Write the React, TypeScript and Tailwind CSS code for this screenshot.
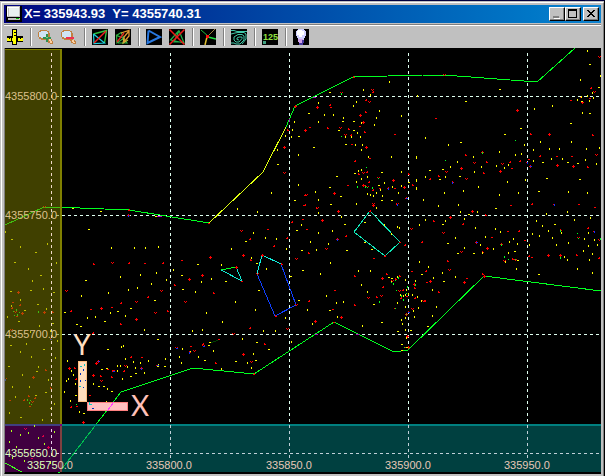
import type { ReactNode } from 'react';

// survey points, "x,y" pairs in plot pixels
const yellowTall = `389,81 363,89 370,94 417,95 353,105 356,101 318,102 324,114 333,114 379,110 401,115 294,121 318,121 343,117 361,122 376,117
374,124 357,132 292,129 291,136 285,135 345,136 351,136 360,136 355,144 362,144 361,149 368,156 391,156 416,157 298,154 277,149 358,170 361,169
401,171 298,184 271,192 315,191 318,199 356,203 361,178 367,176 356,181 384,182 392,186 401,185 398,192 416,188 416,180 380,189 367,193 370,194
373,195 376,192 382,195 237,208 257,211 318,212 318,232 341,216 301,224 332,230 310,241 328,243 316,249 265,237 253,232 231,248 251,257 276,238
286,248 266,268 235,301 206,312 222,321 202,329 255,309 320,273 330,262 326,295 336,302 343,301 307,309 285,317 337,316 312,323 263,330 275,330
291,341 358,270 361,284 362,325 384,224 397,226 391,233 438,205 458,204 376,207 399,227 419,261 370,270 367,291 433,277 428,266 442,272 455,276
432,289 417,296 412,294 436,306 432,315 421,300 418,307 414,316 413,310 405,317 401,319 402,323 405,329 406,337 397,276 391,281 405,279 406,289
400,294 403,295 405,294 408,293 397,302 405,306 415,280 419,224 425,219 460,211 445,220 464,218 477,211 455,237 464,247 475,227 495,228 500,231
485,236 480,244 493,248 482,252 509,241 513,238 517,243 508,252 505,261 516,268 529,244 532,233 539,235 542,225 548,230 552,237 561,232 556,244
568,242 564,256 567,259 577,268 588,232 584,238 594,239 588,245 583,250 592,253 597,244 589,259 592,272 546,213 574,219 567,211 590,217 536,220
587,50 580,79 600,75 587,95 581,96 592,92 577,99 589,100 593,97 582,112 552,105 534,108 425,137 448,144 499,151 524,144 533,149 540,141 549,148
559,148 571,141 586,148 599,147 416,156 473,156 457,161 450,166 425,176 445,176 416,179 416,187 444,192 463,190 478,186 474,171 481,166 496,165
504,167 508,164 515,154 521,153 533,160 551,158 562,158 585,159 596,163 525,179 507,181 518,192 568,191 587,192 499,194 423,199 111,247 134,247
145,247 158,246 173,269 156,272 140,274 120,276 166,279 151,283 137,287 128,289 108,292 81,295 195,291 110,312 125,315 87,317 95,316 144,329
192,330 123,345 201,281 211,278 221,264 121,346 67,360 125,358 117,365 120,365 133,361 135,367 140,362 148,360 127,366 117,370 122,378 144,372
158,364 165,358 179,356 181,362 182,348 198,356 107,388 106,401 66,380 75,383 71,370 79,411 93,383 70,400 64,391 68,378 73,374 253,353 247,362
251,367 242,338 213,350 221,368 5,231 20,246 47,243 56,262 28,268 32,280 43,288 20,299 46,308 7,316 39,325 30,331 20,351 31,356 55,357 22,374
48,379 12,386 54,403 9,412 42,419 29,386 57,340 11,305 50,330 26,343 15,396 38,366`;

const yellowWide = `329,92 308,113 342,121 353,121 338,130 353,130 298,136 345,144 313,147 277,164 336,176 381,172 354,173 329,187 340,196
294,200 330,204 378,185 381,200 391,200 408,182 344,224 296,230 346,250 301,250 245,241 256,263 225,281 258,290 302,270 290,276 329,310 298,300
381,322 364,222 364,242 371,249 443,281 427,326 410,330 401,344 401,350 406,347 397,331 373,304 388,277 391,278 421,274 442,224 468,214 495,208
447,243 457,253 473,253 514,251 517,260 554,224 538,274 499,89 465,101 589,64 598,87 581,101 589,113 570,123 520,128 504,134 460,142 442,169
429,170 439,179 459,176 542,162 567,162 577,163 546,178 579,179 538,191 72,208 100,211 155,216 88,229 85,280 181,275 182,289 154,300 130,308
117,311 104,321 80,326 157,339 197,264 107,349 101,369 106,368 130,376 135,373 157,366 164,366 189,351 111,391 103,386 98,386 83,413 75,395
76,324 64,312 208,345 209,342 204,360 235,361 255,360 256,342 268,349 11,239 35,252 14,262 40,275 30,290 10,291 53,292 18,321 52,323 10,345
43,349 8,366 36,371 35,395 20,417 50,408 37,304 24,310 45,392`;

const red = `341,93 330,105 331,107 317,107 310,127 305,130 327,128 340,128 348,129 345,135 351,135 352,144 355,161 370,158 366,147 364,132 363,122
365,112 369,102 366,100 372,90 373,92 360,126 360,115 395,134 284,147 287,130 284,173 358,174 363,173 367,172 348,185 305,195 304,205 334,193
316,208 363,185 365,186 367,187 369,182 378,178 373,190 380,188 393,180 395,188 404,187 412,185 373,204 408,174 241,231 250,239 268,229 274,246
210,257 202,275 213,293 243,255 250,260 306,195 305,205 317,208 292,222 303,219 322,220 307,229 338,211 337,239 326,249 308,253 296,259 346,236
335,290 309,301 333,309 341,317 354,305 315,321 354,276 287,329 250,328 233,334 287,238 374,258 373,205 397,204 382,278 386,274 368,298 376,297
381,296 383,287 511,205 532,204 579,204 472,211 485,215 450,217 433,221 443,233 463,224 411,229 422,242 492,237 501,244 508,231 487,248 482,252
461,252 447,261 449,270 405,245 412,271 426,271 427,282 430,281 438,292 414,284 414,288 423,301 425,301 412,309 415,298 395,308 406,314 467,278
464,282 482,274 504,261 512,259 515,260 529,256 532,257 519,231 525,240 548,255 560,230 560,255 576,255 578,238 588,228 599,240 599,258 595,207
407,336 405,347 408,347 395,279 392,281 399,276 399,291 403,290 407,296 401,298 436,118 517,110 530,134 549,134 592,135 599,57 591,88 594,92
581,97 590,98 582,102 571,100 482,152 465,155 474,163 486,162 502,164 510,162 512,168 520,161 529,159 500,171 483,173 461,168 438,176 446,172
430,179 466,179 540,156 557,156 557,165 572,156 573,166 587,167 596,155 93,264 112,263 129,263 145,263 163,263 182,260 210,257 202,275 189,279
174,285 161,291 148,297 136,302 121,303 112,307 101,308 91,309 136,319 120,324 155,313 167,311 185,302 93,333 191,346 203,344 219,339 69,368
74,368 96,363 107,369 113,371 124,371 125,366 131,357 142,357 141,368 157,365 93,375 100,376 101,381 111,377 194,351 71,407 77,406 76,379 90,395
83,422 264,344 243,354 215,363 251,362 254,374 44,207 129,210 209,223 236,267 242,281 262,255 281,264 257,274 275,316 296,305 370,211 400,242
385,256 334,322 484,276 601,290 295,106 353,77 444,75 12,308 15,312 20,305 17,316 22,313 13,302 44,312 52,312 11,330 28,396 32,402 24,400 30,406
35,398 10,400 18,292 45,370 33,377 50,388 66,291 71,311`;

const green = `366,167 357,186 367,187 372,187 341,136 341,93 395,280 393,283 391,282 398,277 396,290 401,295 406,293 403,299 395,308 407,286
515,140 482,152 445,160 560,230 578,238 560,257 577,233 504,256 508,259 600,238 515,259 365,186 378,178 415,284 406,314 501,244 13,311 16,309
19,312 17,314 14,315 27,399 30,400 29,402 31,404 38,311 76,404 379,301 404,347`;

const blue = `397,204 406,198 554,204 476,242 594,231 530,166 452,182 176,348 189,352 203,346 141,368 157,365 388,188 81,374 83,368 408,312 128,215
50,339 5,379 113,371 79,388 88,404 337,239 98,361 527,162`;

const lime = `11,430 20,434 9,441 28,432 38,437 16,446 31,449 44,443 54,431 24,460 50,462 12,457 40,466 34,425`;
const crimson = `25,429 43,436 32,458 48,447`;

const toPath = (points: string, shape: (i: number) => string) =>
  points
    .trim()
    .split(/\s+/)
    .map((p, i) => `M${p.replace(',', ' ')}${shape(i)}`)
    .join('');

const tall = () => 'h1v2h-1z';
const wide = () => 'h2v1h-2z';
const marks = [
  'm-1 -1h1v1h-1z m2 0h1v1h-1z m-1 1h1v1h-1z',
  'm-1 0h3v1h-3z m1 -1h1v3h-1z',
  'm-1 0h2v1h-2z m1 -1h1v1h-1z',
  'm0 -1h1v2h-1z m1 1h1v1h-1z',
  'm-1 0h2v1h-2z',
];
const mark = (i: number) => marks[(i * 7 + (i >> 2)) % marks.length];
const dot = () => 'h1v1h-1z';

const columns = [51, 170, 289, 408, 527];
const rows = [96, 215, 334, 453];

function SurveyPlot() {
  return (
    <svg viewBox="5 48 596 425" className="block w-full bg-black" role="img" aria-label="Survey plot" shapeRendering="crispEdges">
      {/* grid */}
      <g stroke="#dffff0" strokeDasharray="3 3">
        {columns.map((x) => <path key={x} d={`M${x + 0.5} 53V458`} />)}
        {rows.map((y) => <path key={y} d={`M56 ${y + 0.5}H599`} />)}
      </g>

      {/* boundary lines */}
      <g fill="none" stroke="#00ff20">
        <path d="M5 225L44 207H55L129 210L209 223" />
        <path d="M209 223L263 172L286 127" stroke="#dfff10" />
        <path d="M286 127L295 106L353 77L423 75H444L537 82L575 48" />
        <path d="M58 474L121 392L193 368L254 374L334 322L394 352L408 350L484 276L601 291" />
        <path d="M221 270L236 267" />
        <path d="M236 267L242 281L221 270" stroke="#10e8d0" />
        <path d="M257 274L262 255L281 264" stroke="#10f0e0" />
        <path d="M281 264L296 305L275 316L257 274" stroke="#1040ff" />
        <path d="M370 211L400 242L385 256L354 232Z" stroke="#10e8b8" />
        <path d="M211 343L218 340" stroke="#004000" />
        <path d="M313 97h3M315 334h3M356 334h3M157 216h5M289 119v3" stroke="#c000d0" />
      </g>

      {/* points */}
      <path d={toPath(red, mark)} fill="#ff0000" />
      <path d={toPath(yellowTall, tall)} fill="#ffff00" />
      <path d={toPath(yellowWide, wide)} fill="#ffff00" />
      <path d={toPath(green, (i) => (i % 2 ? tall() : dot()))} fill="#00ff20" />
      <path d={toPath(blue, mark)} fill="#ff0000" />
      <path d={toPath(blue, (i) => (i % 2 ? wide() : tall()))} fill="#1030ff" />

      {/* axis bands */}
      <path d="M5 49H61V425H5Z" fill="#808000" opacity="0.5" />
      <path d="M5 49H62V50H5ZM60 49H62V424H60Z" fill="#808000" />
      <path d="M61 425H601V472H61Z" fill="#008080" opacity="0.5" />
      <path d="M62 424H601V426H62Z" fill="#008080" />
      <path d="M5 426H60V472H5Z" fill="#400040" />
      <path d="M5 424H60V426H5Z" fill="#404080" />
      <path d="M60 426H62V472H60Z" fill="#804040" />
      <path d="M60 424H62V426H60Z" fill="#800080" />
      <path d="M51.5 429V458M56 453.5H60" stroke="#e8d0e8" strokeDasharray="3 3" />
      <path d="M5 463L22 472" stroke="#40ff20" />
      <path d={toPath(lime, tall)} fill="#b0ff20" />
      <path d={toPath(crimson, mark)} fill="#e00048" />

      {/* grid over the bands */}
      <g strokeDasharray="3 3">
        <path d="M51.5 53V424" stroke="#efd8c8" />
        {columns.slice(1).map((x) => <path key={x} d={`M${x + 0.5} 425V458`} stroke="#c0d0d8" strokeDashoffset="0" />)}
        <path d="M62 453.5H599" stroke="#c0d0d8" />
      </g>

      {/* axis labels */}
      <g fontFamily="'Liberation Sans', Arial, sans-serif" fontSize="11" fill="#dcc08c">
        <text x="5" y="100">4355800.0</text>
        <text x="5" y="219">4355750.0</text>
        <text x="5" y="338">4355700.0</text>
        <text x="5" y="457" fill="#dfffbf">4355650.0</text>
        <text x="27" y="469" fill="#dfffbf">33575<tspan fill="#e8c8b8">0.0</tspan></text>
        <g fill="#e8c8b8">
          <text x="146" y="469">335800.0</text>
          <text x="266" y="469">335850.0</text>
          <text x="385" y="469">335900.0</text>
          <text x="504" y="469">335950.0</text>
        </g>
      </g>

      {/* axis handles */}
      <path d="M78.5 361.5H86.5V401.5H78.5Z" fill="#ffdfbf" stroke="#ffbf80" />
      <path d="M87.5 402.5H127.5V410.5H87.5Z" fill="#ffc0c0" stroke="#ff8080" />
      <path d="M84 364h1v2h-1zM80 366h2v1h-2zM79 386h2v1h-2zM89 402h1v3h-1zM90 404h2v1h-2z" fill="#10c8c0" />
      <path d="M83 369h1v2h-1zM80 373h1v2h-1zM85 380h1v1h-1zM80 380h1v2h-1zM83 387h1v1h-1zM92 408h2v1h-2z" fill="#0030c0" />
      <path d="M107 411L114 402" stroke="#ff40ff" />
      <g fontFamily="Lato, 'Liberation Sans', sans-serif" fontSize="28" textAnchor="middle">
        <text x="82" y="355" fill="#ffdfc0">Y</text>
        <text x="140" y="416" fill="#ffc0b8">X</text>
      </g>
    </svg>
  );
}

function Tool({ label, children }: { label: string; children: ReactNode }) {
  return (
    <button type="button" aria-label={label} className="mr-[7px] block size-4 shrink-0">
      <svg viewBox="0 0 16 16" className="block size-4" fill="none">
        {children}
      </svg>
    </button>
  );
}

function Separator() {
  return <div className="mr-1.5 h-[18px] w-[2px] shrink-0 border-l border-[#808080] bg-white" />;
}

const black = <rect width="16" height="16" fill="#000" />;

function Toolbar() {
  return (
    <div className="flex h-[22px] items-center overflow-hidden pl-[3px]">
      <Tool label="Crosshair">
        <path d="M5 0h5v16H5zM0 7h16v6H0z" fill="#000" />
        <path d="M0 9h16v3H0zM6 1h3v14H6z" fill="#ffff00" />
        <path d="M4 8h1v5H4zM9 8h2v5H9zM7 3h2v1H7zM7 6h2v1H7zM2 9h1v1H2zM13 9h1v1h-1z" fill="#000" />
      </Tool>
      <Separator />
      <Tool label="Zoom in">
        <path d="M2 1h7v1h2v2h1v5h-1v1h-2v1H3v-1H1V8H0V3h1V2h1z" fill="#c08040" />
        <path d="M3 2h6v1h1v5H9v1H3V8H1V3h2z" fill="#d0e4f4" />
        <path d="M9 9h3v1h2v2h1v3h-3v-1h-2v-2H9z" fill="#c08040" />
        <path d="M11 10h2v2h1v2h-2v-2h-1z" fill="#ffd0a0" />
        <path d="M8 5h2v3h3v2h-3v3H8v-3H5V8h3z" fill="#309050" />
        <path d="M8 8h2v1H8z" fill="#80d080" />
      </Tool>
      <Tool label="Zoom out">
        <path d="M2 1h7v1h2v2h1v5h-1v1h-2v1H3v-1H1V8H0V3h1V2h1z" fill="#c08040" />
        <path d="M3 2h6v1h1v5H9v1H3V8H1V3h2z" fill="#d0e4f4" />
        <path d="M9 10h3v1h2v1h1v3h-3v-1h-2v-2H9z" fill="#c08040" />
        <path d="M11 11h2v2h1v1h-2v-1h-1z" fill="#ffd0a0" />
        <path d="M5 8h8v2H5z" fill="#f03050" />
      </Tool>
      <Separator />
      <Tool label="Triangulate">
        {black}
        <path d="M1.5 5L14.5 1.5L12.5 14" stroke="#30c040" strokeWidth="1.4" />
        <path d="M1.5 5L2 14.5L12.5 14L1.5 5" stroke="#20d0e0" strokeWidth="1.2" />
        <path d="M2 14L14 2" stroke="#f02020" strokeWidth="1.4" />
      </Tool>
      <Tool label="Build surface">
        {black}
        <path d="M1.5 6.5L6 3.5L9 9L2 14L1.5 6.5L8 9L12 14H3" stroke="#30b040" strokeWidth="1.2" />
        <path d="M9 9L8 14L13 11" stroke="#b0c040" strokeWidth="1.2" />
        <path d="M2 13L9 4" stroke="#f02020" strokeWidth="1.3" />
        <path d="M6 4L14 1.5L14 7L9 13L9 8L14 2" stroke="#e09830" strokeWidth="1.3" />
      </Tool>
      <Separator />
      <Tool label="Outline">
        {black}
        <path d="M2.5 1.5L14 8L1.5 14L2.5 1.5" stroke="#2878e0" strokeWidth="2" />
      </Tool>
      <Tool label="Delete triangles">
        {black}
        <path d="M10 1.5L1.5 11L15 14L10 1.5M10 2L5 13H15" stroke="#20b048" strokeWidth="1.2" />
        <path d="M0.5 0.5L15.5 15.5M15.5 0.5L0.5 15.5" stroke="#f01818" strokeWidth="1.5" />
      </Tool>
      <Separator />
      <Tool label="Point links">
        {black}
        <path d="M8 7L1 1" stroke="#20c040" />
        <path d="M8 7L15 0" stroke="#a08040" />
        <path d="M8 8L16 10" stroke="#20e040" strokeWidth="1.5" />
        <path d="M7 8L5 16" stroke="#e0c030" strokeWidth="1.5" />
        <path d="M6 6h3v3H6z" fill="#ff1010" />
      </Tool>
      <Separator />
      <Tool label="Contours">
        {black}
        <path
          d="M0 1.5H3L6 2.5H16M0 5L4 4L7 3.5H13L15 5V10L11 15M0 14H3L5 15H9L13 11V7L11 5.5H7L3 8V11L5 13H8L11 9.5V8H8L6 9V10.5L8 11"
          stroke="#40c8a8"
        />
      </Tool>
      <Separator />
      <Tool label="Elevations">
        {black}
        <text x="1" y="11" fill="#90e040" fontFamily="'Liberation Sans', Arial, sans-serif" fontSize="9" fontWeight="700">125</text>
        <path d="M1 12h3v3H1z" fill="#40a080" />
      </Tool>
      <Separator />
      <Tool label="Lighting">
        {black}
        <path d="M5 0h6v1h1v1h1v5h-1v2h-1v2H5V9H4V7H3V2h1V1h1z" fill="#d0d0ff" />
        <path d="M5 1h4v1h2v4H9v2H6V6H4V2h1z" fill="#fff" />
        <path d="M5 10h5v4H6v-1H5z" fill="#d0a0e8" />
        <path d="M9 11h2v3H9zM6 14h4v2H6z" fill="#4838a0" />
      </Tool>
    </div>
  );
}

function WindowButton({ label, children }: { label: string; children: ReactNode }) {
  return (
    <button
      type="button"
      aria-label={label}
      className="block h-[14px] w-4 border border-t-white border-l-white border-r-black border-b-black bg-[#c0c0c0] shadow-[inset_-1px_-1px_#808080]"
    >
      <svg viewBox="0 0 14 12" className="block h-3 w-[14px]" fill="none" shapeRendering="crispEdges">
        {children}
      </svg>
    </button>
  );
}

function TitleBar() {
  return (
    <header className="flex h-[18px] items-center bg-linear-to-r from-[#000080] to-[#1084d0] pr-[2px] pl-[2px]">
      <svg viewBox="0 0 16 16" className="mr-[2px] size-4 shrink-0" shapeRendering="crispEdges">
        <path d="M0 0h16v16H0z" fill="#000" />
        <path d="M1 0h13v11H1z" fill="#c0c0c0" />
        <path d="M2 1h11v1H2zM1 1h1v9H1z" fill="#fff" />
        <path d="M3 2h10v8H3z" fill="#e8f0f0" />
        <path d="M2 12h12v2H2z" fill="#c0c0c0" />
        <path d="M10 12h3v1h-3z" fill="#00c000" />
      </svg>
      <h1 className="flex-1 overflow-hidden font-['Liberation_Sans',Arial,sans-serif] text-[13px] leading-[18px] font-bold whitespace-pre text-white">
        {'X= 335943.93  Y= 4355740.31'}
      </h1>
      <WindowButton label="Minimize">
        <path d="M4 10h6v1H4z" fill="#fff" />
        <path d="M3 8h6v2H3z" fill="#808080" />
      </WindowButton>
      <WindowButton label="Maximize">
        <path d="M2 1h9v9H2zM3 3v6h7V3z" fill="#000" fillRule="evenodd" />
      </WindowButton>
      <div className="w-[2px]" />
      <WindowButton label="Close">
        <path d="M3 2h2v1h1v1h2V3h1V2h2v1h-1v1H9v1H8v1h1v1h1v1h1v1H9V8H8V7H6v1H5v1H3V8h1V7h1V6h1V5H5V4H4V3H3z" fill="#000" />
      </WindowButton>
    </header>
  );
}

export default function App() {
  return (
    <div className="border-t border-r border-t-[#000040] border-r-black bg-[#c0c0c0] pt-px pl-px">
      <div className="border-t border-r border-l border-t-white border-r-[#808080] border-l-white px-[2px] pt-[2px] pb-[2px]">
        <TitleBar />
        <div className="mt-px h-[2px] border-t border-[#808080] bg-white" />
        <Toolbar />
        <main className="border-b border-l border-b-black border-l-[#808080]">
          <SurveyPlot />
        </main>
      </div>
    </div>
  );
}
